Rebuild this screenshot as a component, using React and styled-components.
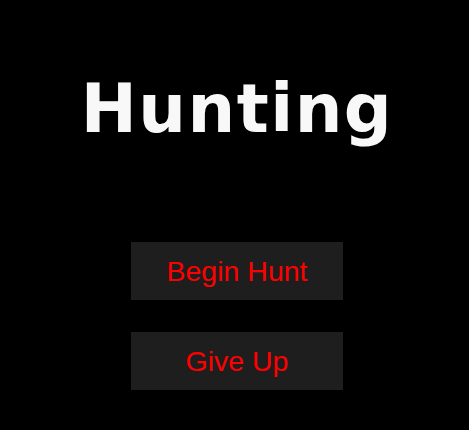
import React from 'react';
import styled, { createGlobalStyle } from 'styled-components';

const GlobalStyle = createGlobalStyle`
  html, body {
    margin: 0;
    padding: 0;
    background: #000;
  }
`;

const Screen = styled.div`
  width: 469px;
  height: 430px;
  background: #000;
  display: flex;
  flex-direction: column;
  align-items: center;
  box-sizing: border-box;
  padding-left: 5px;
`;

const Title = styled.h1`
  margin: 76px 0 0 0;
  font-family: "DejaVu Sans", sans-serif;
  font-weight: 700;
  font-size: 67px;
  line-height: 67px;
  letter-spacing: 1.5px;
  color: #f8f8f8;
`;

const Menu = styled.div`
  display: flex;
  flex-direction: column;
  gap: 32px;
  margin-top: 99px;
`;

const MenuButton = styled.button`
  width: 212px;
  height: 58px;
  border: none;
  background: #1e1e1e;
  color: #f00;
  font-family: "Liberation Sans", Arial, sans-serif;
  font-size: 28.5px;
  padding: 0;
  cursor: pointer;
`;

export default function App() {
  return (
    <>
      <GlobalStyle />
      <Screen>
        <Title>Hunting</Title>
        <Menu>
          <MenuButton>Begin Hunt</MenuButton>
          <MenuButton>Give Up</MenuButton>
        </Menu>
      </Screen>
    </>
  );
}
